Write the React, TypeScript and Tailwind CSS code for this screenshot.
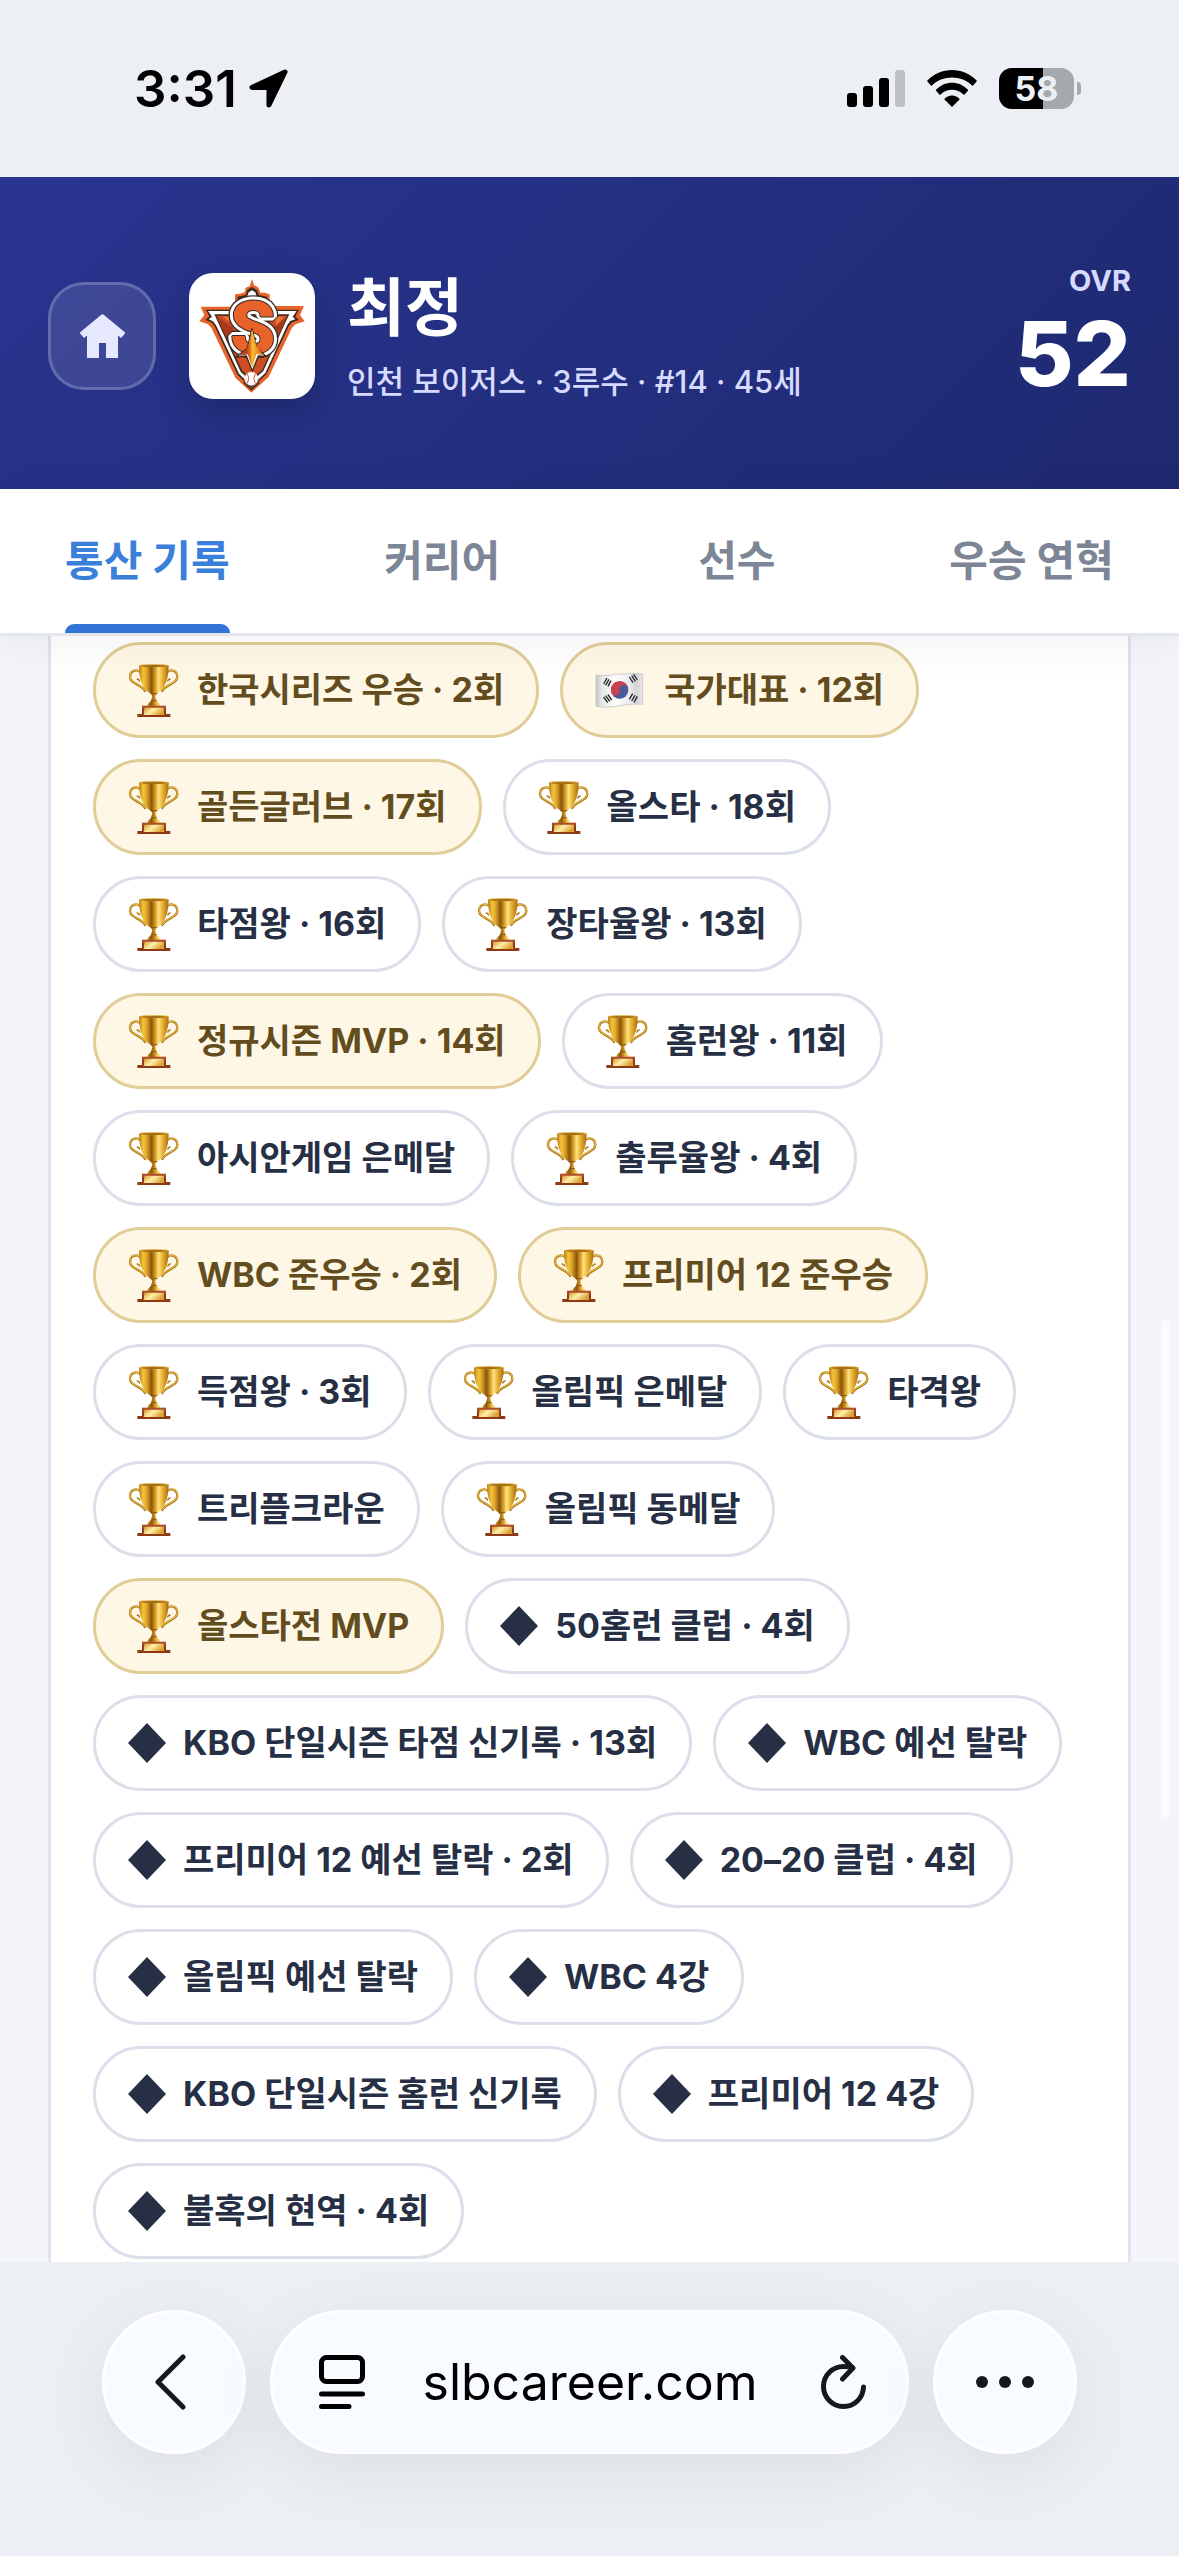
import { useState } from "react"
import { clsx } from "clsx"

type IconKind = "trophy" | "flag" | "diamond"

interface Award {
  label: string
  icon: IconKind
  gold?: boolean
}

const TABS = ["통산 기록", "커리어", "선수", "우승 연혁"]

const BATTERY = 58

const AWARDS: Award[] = [
  { label: "한국시리즈 우승 · 2회", icon: "trophy", gold: true },
  { label: "국가대표 · 12회", icon: "flag", gold: true },
  { label: "골든글러브 · 17회", icon: "trophy", gold: true },
  { label: "올스타 · 18회", icon: "trophy" },
  { label: "타점왕 · 16회", icon: "trophy" },
  { label: "장타율왕 · 13회", icon: "trophy" },
  { label: "정규시즌 MVP · 14회", icon: "trophy", gold: true },
  { label: "홈런왕 · 11회", icon: "trophy" },
  { label: "아시안게임 은메달", icon: "trophy" },
  { label: "출루율왕 · 4회", icon: "trophy" },
  { label: "WBC 준우승 · 2회", icon: "trophy", gold: true },
  { label: "프리미어 12 준우승", icon: "trophy", gold: true },
  { label: "득점왕 · 3회", icon: "trophy" },
  { label: "올림픽 은메달", icon: "trophy" },
  { label: "타격왕", icon: "trophy" },
  { label: "트리플크라운", icon: "trophy" },
  { label: "올림픽 동메달", icon: "trophy" },
  { label: "올스타전 MVP", icon: "trophy", gold: true },
  { label: "50홈런 클럽 · 4회", icon: "diamond" },
  { label: "KBO 단일시즌 타점 신기록 · 13회", icon: "diamond" },
  { label: "WBC 예선 탈락", icon: "diamond" },
  { label: "프리미어 12 예선 탈락 · 2회", icon: "diamond" },
  { label: "20–20 클럽 · 4회", icon: "diamond" },
  { label: "올림픽 예선 탈락", icon: "diamond" },
  { label: "WBC 4강", icon: "diamond" },
  { label: "KBO 단일시즌 홈런 신기록", icon: "diamond" },
  { label: "프리미어 12 4강", icon: "diamond" },
  { label: "불혹의 현역 · 4회", icon: "diamond" },
]

// Gradients shared by every trophy in the list
function TrophyDefs() {
  return (
    <svg className="absolute size-0" aria-hidden="true">
      <defs>
        <linearGradient id="cup" x1="0" x2="1">
          <stop offset="0" stopColor="#b9790f" />
          <stop offset="0.14" stopColor="#f3c53a" />
          <stop offset="0.26" stopColor="#e0a526" />
          <stop offset="0.42" stopColor="#8a560c" />
          <stop offset="0.52" stopColor="#c98c1c" />
          <stop offset="0.66" stopColor="#ffe27a" />
          <stop offset="0.82" stopColor="#e2a92c" />
          <stop offset="1" stopColor="#a86c10" />
        </linearGradient>
        <linearGradient id="plate" x1="0" x2="1" y2="0.4">
          <stop offset="0" stopColor="#d9982a" />
          <stop offset="0.5" stopColor="#fff0a8" />
          <stop offset="1" stopColor="#dca035" />
        </linearGradient>
        <linearGradient id="wood" y1="0" y2="1" x2="0">
          <stop offset="0" stopColor="#b4532a" />
          <stop offset="1" stopColor="#7c2d12" />
        </linearGradient>
      </defs>
    </svg>
  )
}

function TrophyIcon() {
  return (
    <svg viewBox="113 101 156 159" className="h-[53px] w-[52px] shrink-0" aria-hidden="true">
      <g fill="none" stroke="#b07a18" strokeWidth="7" strokeLinecap="round">
        <path d="M149 125C139 116 119 120 119 140C120 162 153 160 164 182" />
        <path d="M231 125C241 116 261 120 261 140C260 162 227 160 216 182" />
      </g>
      <g fill="none" stroke="#efc34a" strokeWidth="3" strokeLinecap="round">
        <path d="M149 124C139 115 118 119 119 139C120 160 153 159 163 180" />
        <path d="M231 124C241 115 262 119 261 139C260 160 227 159 217 180" />
      </g>
      <path d="M139 146q8 0 9 8M241 146q-8 0-9 8" fill="none" stroke="#b07a18" strokeWidth="4" />
      <path
        d="M146 106C146 146 157 178 182 190L186 198L182 211L172 222V228H209V222L199 211L195 198L199 190C223 178 235 146 235 106Z"
        fill="url(#cup)"
      />
      <ellipse cx="190.500" cy="106" rx="44.500" ry="4.500" fill="#d8a02a" />
      <ellipse cx="190.500" cy="107" rx="37" ry="2.500" fill="#8f5c10" />
      <path d="M180 190h21M183 211h16" stroke="#8a560c" strokeWidth="3" />
      <path d="M155 226h72v25H155z" fill="url(#wood)" />
      <path d="M141 251h99v9h-99z" fill="#8c3a16" />
      <path d="M162 232h58l2 22h-62z" fill="url(#plate)" />
    </svg>
  )
}

function FlagIcon() {
  return (
    <svg viewBox="0 0 156 120" className="h-[40px] w-[52px] shrink-0" aria-hidden="true">
      <defs>
        <linearGradient id="cloth" x1="0" x2="1">
          <stop offset="0" stopColor="#c4c4c6" />
          <stop offset="0.12" stopColor="#e6e6e8" />
          <stop offset="0.4" stopColor="#ffffff" />
          <stop offset="0.7" stopColor="#ececee" />
          <stop offset="0.88" stopColor="#d4d4d6" />
          <stop offset="1" stopColor="#e9e9ea" />
        </linearGradient>
      </defs>
      <path
        d="M3 15C50 22 90 4 143 12V103C90 98 50 118 3 109Z"
        fill="url(#cloth)"
        stroke="#bdbdc0"
        strokeWidth="2"
      />
      <circle cx="74" cy="60" r="26" fill="#4a5a98" />
      <path d="M48 66A26 27 0 1 1 100 55A13 13 0 0 0 74 61A13 13 0 0 1 48 66Z" fill="#c9444f" />
      <g stroke="#26262a" strokeWidth="4">
        <path d="M26 42l10-18M32 46l10-18M39 49l9-17" />
        <path d="M103 21l11 17M110 17l11 17M116 13l11 17" />
        <path d="M26 81l12 17M32 77l12 17M39 74l11 16" />
        <path d="M103 88l10-17M110 93l10-17M117 97l10-18" />
      </g>
    </svg>
  )
}

function DiamondIcon() {
  return (
    <svg viewBox="0 0 38 40" className="h-[40px] w-[38px] shrink-0" fill="currentColor" aria-hidden="true">
      <path d="M19 0L38 20L19 40L0 20Z" />
    </svg>
  )
}

function AwardIcon({ kind }: { kind: IconKind }) {
  if (kind === "trophy") return <TrophyIcon />
  if (kind === "flag") return <FlagIcon />
  return <DiamondIcon />
}

function TeamLogo() {
  return (
    <svg viewBox="27 39 378 378" className="size-full" role="img" aria-label="인천 보이저스">
      <defs>
        <linearGradient id="flame" x1="0" x2="1">
          <stop offset="0.3" stopColor="#b83d18" />
          <stop offset="0.5" stopColor="#ef8a1f" />
          <stop offset="0.52" stopColor="#fbc23a" />
          <stop offset="0.8" stopColor="#e8851e" />
        </linearGradient>
      </defs>
      <path
        d="M216 57L222 75L236 83L241 98L254 98L269 103V125L281 138H372L360 165L374 184L346 193L336 203L266 351L214 398L166 353L94 203L84 193L58 184L73 165L62 140H152L165 129V103L180 101L194 97L197 83L209 79Z"
        fill="#e9642a"
      />
      <path
        d="M216 81L231 90L236 105L260 110V130L280 149H357L346 169L356 180L336 187L326 199L259 343L214 385L173 345L104 199L94 187L76 180L88 169L77 149H152L173 132V110L197 105L202 89Z"
        fill="#3b2a22"
      />
      <path
        d="M216 91L226 97L230 110L253 115V131L279 153H350L338 170L346 178L331 183L322 195L256 339L214 378L177 341L108 196L99 184L86 178L96 170L84 153H154L180 131V115L202 109L206 97Z"
        fill="#fff"
      />
      <path d="M103 163H328L315 190L250 333L214 365L182 335Z" fill="#3b2a22" />
      <path d="M109 167H322L247 329L214 358L186 331Z" fill="#cf4d23" />
      <path d="M109 167L160 205V280L186 331L170 299ZM322 167L280 205L262 294L247 329Z" fill="#a83a1b" />
      <path d="M128 170h34v25zM284 170h30l-25 26z" fill="#ed7430" />
      <g className="font-['Roboto'] text-[218px] font-black [paint-order:stroke]" strokeLinejoin="bevel">
        <text x="218" y="280" textAnchor="middle" className="fill-[#3b2a22] stroke-[#3b2a22]" strokeWidth="32">
          S
        </text>
        <text x="218" y="280" textAnchor="middle" className="fill-white stroke-white" strokeWidth="24" aria-hidden="true">
          S
        </text>
        <text x="218" y="280" textAnchor="middle" className="fill-[#e8632a] stroke-[#3b2a22]" strokeWidth="6" aria-hidden="true">
          S
        </text>
      </g>
      <path
        d="M216 205L230 265L258 289L235 288L217 333L199 288L168 291L202 265Z"
        fill="#fff"
        stroke="#3b2a22"
        strokeWidth="4"
      />
      <path d="M216 208L229 258L250 286L229 282L217 324L203 283L178 288L204 260Z" fill="url(#flame)" />
      <circle cx="214" cy="356" r="20" fill="#fff" stroke="#d9cfc9" strokeWidth="2" />
      <path d="M202 341q9 14 0 29M226 341q-9 14 0 29" fill="none" stroke="#d8552c" strokeWidth="3" />
      <path d="M191 367L214 389L238 367" fill="none" stroke="#3b2a22" strokeWidth="4" />
    </svg>
  )
}

function StatusBar() {
  return (
    <div className="flex h-[177px] items-center justify-between bg-[#eceff4] pr-[98px] pl-[134px] text-black">
      <div className="flex items-center gap-3">
        <span className="text-[51px] leading-[60px] font-semibold">3:31</span>
        <svg viewBox="0 0 39 39" className="size-[39px]" aria-hidden="true">
          <path
            d="M36 3L3 18.500H20V36Z"
            fill="currentColor"
            stroke="currentColor"
            strokeWidth="5"
            strokeLinejoin="round"
          />
        </svg>
      </div>
      <div className="flex items-center gap-[22px]">
        <svg viewBox="0 0 58 37" className="h-[37px] w-[58px]" aria-hidden="true">
          <rect y="23" width="10" height="14" rx="3" />
          <rect x="16" y="16" width="10" height="21" rx="3" />
          <rect x="32" y="8" width="10" height="29" rx="3" />
          <rect x="48" width="10" height="37" rx="3" fill="#bfc1c5" />
        </svg>
        <svg viewBox="409 117 151 111" className="h-[37px] w-[50px]" aria-hidden="true">
          <path d="M409 150C450 106 519 106 560 150L547 165C512 131 457 131 422 165Z" />
          <path d="M435 178C462 148 507 148 534 178L521 192C500 171 469 171 448 192Z" />
          <path d="M461 205C474 190 495 190 508 205L484.500 228Z" />
        </svg>
        <div className="flex items-center gap-[3px]">
          <div className="relative flex h-[41px] w-[75px] items-center justify-center overflow-hidden rounded-[13px] bg-[#a5a9ad]">
            <div className="absolute inset-y-0 left-0 bg-black" style={{ width: `${BATTERY}%` }} />
            <span className="relative text-[34px] leading-[41px] font-bold text-[#eceff4]">{BATTERY}</span>
          </div>
          <div className="h-[13px] w-1 rounded-r-full bg-[#a5a9ad]" />
        </div>
      </div>
    </div>
  )
}

function PlayerHeader() {
  return (
    <header className="flex h-[312px] items-center bg-linear-135 from-[#293590] to-[#1e2970] px-12 pt-1.5 text-white">
      <button
        type="button"
        aria-label="홈"
        className="flex size-[108px] shrink-0 items-center justify-center rounded-[36px] border-3 border-white/20 bg-white/10 text-[#e6e8ff]"
      >
        <svg viewBox="0 0 45 44" className="h-[44px] w-[45px]" fill="currentColor" aria-hidden="true">
          <path d="M21 1Q22.500 -0.500 24 1L44.500 18Q45.500 19 44.500 20L41 24L38 21.500V44H26V29H19V44H7V21.500L4 24L0.500 20Q-0.500 19 0.500 18Z" />
        </svg>
      </button>
      <div className="ml-[33px] size-[126px] shrink-0 overflow-hidden rounded-[24px] bg-white shadow-[0_12px_36px_rgba(0,0,0,0.2)]">
        <TeamLogo />
      </div>
      <div className="ml-8 flex-1">
        <h1 className="text-[63px] leading-[76px] font-bold">최정</h1>
        <p className="mt-4 text-[31px] leading-[42px] font-medium text-[#d7daff]">인천 보이저스 · 3루수 · #14 · 45세</p>
      </div>
      <div className="text-right">
        <div className="text-[29px] leading-[36px] font-bold text-[#d7daff]">OVR</div>
        <div className="text-[90px] leading-[110px] font-extrabold">52</div>
      </div>
    </header>
  )
}

function TabBar() {
  const [active, setActive] = useState(TABS[0])

  return (
    <nav className="relative z-10 grid grid-cols-4 border-b-3 border-[#e3e6ed] bg-white shadow-[0_6px_42px_rgba(0,0,0,0.06)]">
      {TABS.map((tab) => (
        <button
          key={tab}
          type="button"
          onClick={() => setActive(tab)}
          className={clsx(
            "flex h-[144px] justify-center text-[42px] leading-[60px] font-bold",
            active === tab ? "text-[#3a7fd9]" : "text-[#7d8696]",
          )}
        >
          <span className="relative flex h-full items-center">
            {tab}
            {active === tab && <span className="absolute inset-x-0 bottom-0 h-[9px] rounded-t-[9px] bg-[#3273d8]" />}
          </span>
        </button>
      ))}
    </nav>
  )
}

function AwardPill({ award }: { award: Award }) {
  return (
    <li
      className={clsx(
        "flex h-24 items-center gap-[17px] rounded-full border-3 px-8 text-[34px] leading-[48px] font-bold whitespace-nowrap",
        award.gold ? "border-[#e0cd97] bg-[#fef7e6] text-[#634d1e]" : "border-[#dadfea] bg-white text-[#262f44]",
      )}
    >
      <AwardIcon kind={award.icon} />
      <span>{award.label}</span>
    </li>
  )
}

function BrowserBar() {
  const round =
    "flex size-[144px] shrink-0 items-center justify-center rounded-full border-3 border-white bg-[#f8fbff] text-[#15191c] shadow-[0_18px_72px_rgba(0,0,0,0.07)]"

  return (
    <footer className="relative flex gap-6 bg-[#eceff4] px-[102px] pt-12 pb-[102px]">
      <button type="button" aria-label="뒤로" className={round}>
        <svg viewBox="0 0 32 56" className="mr-2 h-[56px] w-[32px]" fill="none" aria-hidden="true">
          <path d="M29 3L4 28L29 53" stroke="currentColor" strokeWidth="5" strokeLinecap="round" strokeLinejoin="round" />
        </svg>
      </button>
      <div className="flex h-[144px] flex-1 items-center rounded-full border-3 border-white bg-[#f8fbff] pr-10 pl-[46px] shadow-[0_18px_72px_rgba(0,0,0,0.07)]">
        <button type="button" aria-label="페이지 메뉴" className="text-black">
          <svg viewBox="0 0 46 54" className="h-[54px] w-[46px]" fill="none" stroke="currentColor" aria-hidden="true">
            <rect x="2.500" y="2.500" width="41" height="24" rx="5" strokeWidth="5" />
            <path d="M2.500 39H43.500M2.500 51.500H30" strokeWidth="5" strokeLinecap="round" />
          </svg>
        </button>
        <span className="flex-1 pr-1.5 text-center text-[50px] leading-[60px] text-black">slbcareer.com</span>
        <button type="button" aria-label="새로고침" className="text-[#15191c]">
          <svg viewBox="0 0 45 54" className="h-[54px] w-[45px]" fill="none" stroke="currentColor" aria-hidden="true">
            <path
              d="M32 13C28 11.500 25 11.500 22.500 11.500A20 20 0 1 0 42.500 32M21.500 2.500L32 13L21.500 24"
              strokeWidth="5"
              strokeLinecap="round"
              strokeLinejoin="round"
            />
          </svg>
        </button>
      </div>
      <button type="button" aria-label="더 보기" className={round}>
        <svg viewBox="0 0 58 12" className="h-[12px] w-[58px]" fill="currentColor" aria-hidden="true">
          <circle cx="6" cy="6" r="6" />
          <circle cx="29" cy="6" r="6" />
          <circle cx="52" cy="6" r="6" />
        </svg>
      </button>
    </footer>
  )
}

export default function App() {
  return (
    <div className="flex min-h-screen flex-col overflow-hidden bg-[#f3f5fa] font-['Inter','Noto_Sans_CJK_KR',sans-serif]">
      <TrophyDefs />
      <StatusBar />
      <PlayerHeader />
      <TabBar />
      <main className="relative flex-1 px-12">
        <div className="h-full border-x-3 border-[#dfe3eb] bg-white px-[42px] pt-[6px] pb-[3px]">
          <ul className="flex flex-wrap gap-[21px]">
            {AWARDS.map((award) => (
              <AwardPill key={award.label} award={award} />
            ))}
          </ul>
        </div>
        {/* scroll thumb */}
        <div className="absolute top-[684px] right-[9px] h-[498px] w-[9px] rounded-full bg-white/60" />
      </main>
      <BrowserBar />
    </div>
  )
}
